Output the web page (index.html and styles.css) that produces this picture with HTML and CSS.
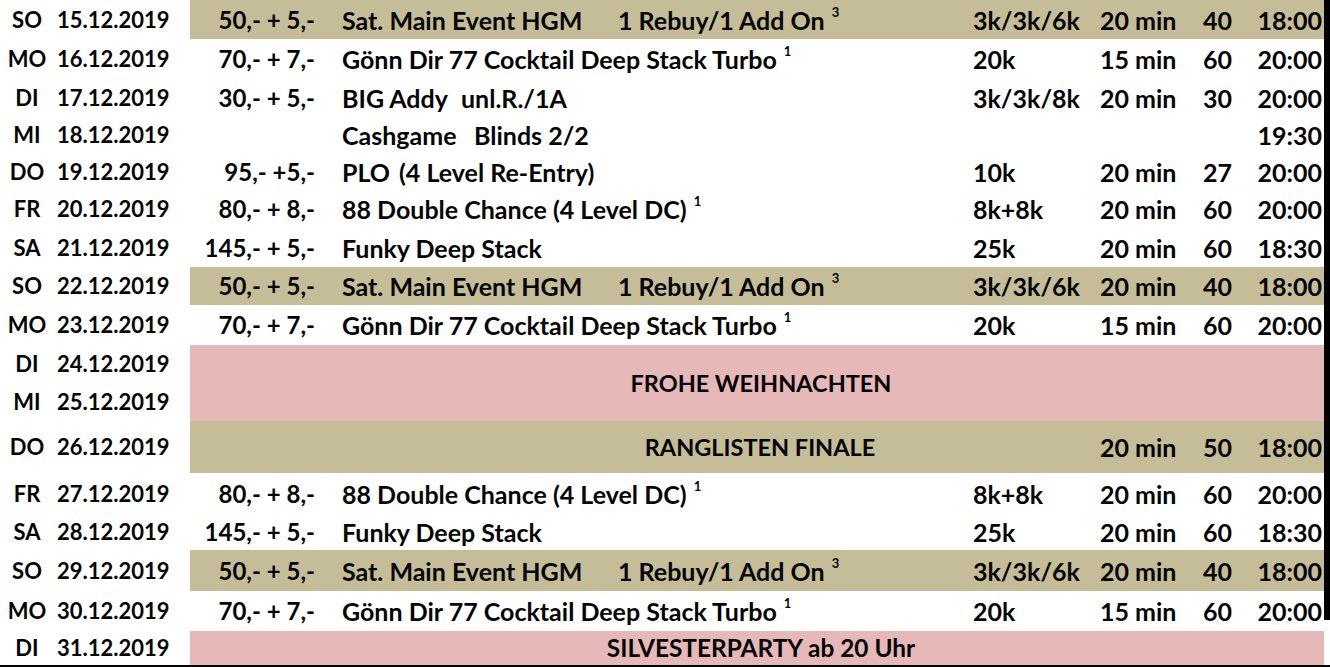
FILE: index.html
```html
<!DOCTYPE html>
<html lang="de">
<head>
<meta charset="utf-8">
<title>Turnierplan Dezember 2019</title>
<link rel="stylesheet" href="styles.css">
</head>
<body>
<div class="sheet">
  <div class="main">
    <table class="plan">
      <colgroup>
        <col class="c-day"><col class="c-date"><col class="c-price"><col class="c-name"><col class="c-chips"><col class="c-lvl"><col class="c-pl"><col class="c-time">
      </colgroup>
      <tbody>
        <tr class="r39 tan">
          <td class="day">SO</td><td class="date">15.12.2019</td>
          <td class="price">50,- + 5,-</td>
          <td class="name"><span class="w-sat">Sat. Main Event HGM</span>1 Rebuy/1 Add On <sup>3</sup></td>
          <td class="chips">3k/3k/6k</td><td class="lvl">20 min</td><td class="pl">40</td><td class="time">18:00</td>
        </tr>
        <tr class="r40">
          <td class="day">MO</td><td class="date">16.12.2019</td>
          <td class="price">70,- + 7,-</td>
          <td class="name">Gönn Dir 77 Cocktail Deep Stack Turbo <sup>1</sup></td>
          <td class="chips">20k</td><td class="lvl">15 min</td><td class="pl">60</td><td class="time">20:00</td>
        </tr>
        <tr class="r38">
          <td class="day">DI</td><td class="date">17.12.2019</td>
          <td class="price">30,- + 5,-</td>
          <td class="name"><span class="w-big">BIG Addy</span>unl.R./1A</td>
          <td class="chips">3k/3k/8k</td><td class="lvl">20 min</td><td class="pl">30</td><td class="time">20:00</td>
        </tr>
        <tr class="r36">
          <td class="day">MI</td><td class="date">18.12.2019</td>
          <td class="price"></td>
          <td class="name"><span class="w-cash">Cashgame</span>Blinds 2/2</td>
          <td class="chips"></td><td class="lvl"></td><td class="pl"></td><td class="time">19:30</td>
        </tr>
        <tr class="r37">
          <td class="day">DO</td><td class="date">19.12.2019</td>
          <td class="price">95,- +5,-</td>
          <td class="name"><span class="w-plo">PLO</span>(4 Level Re-Entry)</td>
          <td class="chips">10k</td><td class="lvl">20 min</td><td class="pl">27</td><td class="time">20:00</td>
        </tr>
        <tr class="r38">
          <td class="day">FR</td><td class="date">20.12.2019</td>
          <td class="price">80,- + 8,-</td>
          <td class="name">88 Double Chance (4 Level DC) <sup>1</sup></td>
          <td class="chips">8k+8k</td><td class="lvl">20 min</td><td class="pl">60</td><td class="time">20:00</td>
        </tr>
        <tr class="r39">
          <td class="day">SA</td><td class="date">21.12.2019</td>
          <td class="price">145,- + 5,-</td>
          <td class="name">Funky Deep Stack</td>
          <td class="chips">25k</td><td class="lvl">20 min</td><td class="pl">60</td><td class="time">18:30</td>
        </tr>
        <tr class="r38 tan">
          <td class="day">SO</td><td class="date">22.12.2019</td>
          <td class="price">50,- + 5,-</td>
          <td class="name"><span class="w-sat">Sat. Main Event HGM</span>1 Rebuy/1 Add On <sup>3</sup></td>
          <td class="chips">3k/3k/6k</td><td class="lvl">20 min</td><td class="pl">40</td><td class="time">18:00</td>
        </tr>
        <tr class="r40">
          <td class="day">MO</td><td class="date">23.12.2019</td>
          <td class="price">70,- + 7,-</td>
          <td class="name">Gönn Dir 77 Cocktail Deep Stack Turbo <sup>1</sup></td>
          <td class="chips">20k</td><td class="lvl">15 min</td><td class="pl">60</td><td class="time">20:00</td>
        </tr>
        <tr class="r38">
          <td class="day">DI</td><td class="date">24.12.2019</td>
          <td class="banner pink" colspan="6" rowspan="2">FROHE WEIHNACHTEN</td>
        </tr>
        <tr class="r38">
          <td class="day">MI</td><td class="date">25.12.2019</td>
        </tr>
        <tr class="r52 tan">
          <td class="day">DO</td><td class="date">26.12.2019</td>
          <td class="banner finale" colspan="3">RANGLISTEN FINALE</td>
          <td class="lvl">20 min</td><td class="pl">50</td><td class="time">18:00</td>
        </tr>
        <tr class="r41">
          <td class="day">FR</td><td class="date">27.12.2019</td>
          <td class="price">80,- + 8,-</td>
          <td class="name">88 Double Chance (4 Level DC) <sup>1</sup></td>
          <td class="chips">8k+8k</td><td class="lvl">20 min</td><td class="pl">60</td><td class="time">20:00</td>
        </tr>
        <tr class="r36">
          <td class="day">SA</td><td class="date">28.12.2019</td>
          <td class="price">145,- + 5,-</td>
          <td class="name">Funky Deep Stack</td>
          <td class="chips">25k</td><td class="lvl">20 min</td><td class="pl">60</td><td class="time">18:30</td>
        </tr>
        <tr class="r41 tan">
          <td class="day">SO</td><td class="date">29.12.2019</td>
          <td class="price">50,- + 5,-</td>
          <td class="name"><span class="w-sat">Sat. Main Event HGM</span>1 Rebuy/1 Add On <sup>3</sup></td>
          <td class="chips">3k/3k/6k</td><td class="lvl">20 min</td><td class="pl">40</td><td class="time">18:00</td>
        </tr>
        <tr class="r40">
          <td class="day">MO</td><td class="date">30.12.2019</td>
          <td class="price">70,- + 7,-</td>
          <td class="name">Gönn Dir 77 Cocktail Deep Stack Turbo <sup>1</sup></td>
          <td class="chips">20k</td><td class="lvl">15 min</td><td class="pl">60</td><td class="time">20:00</td>
        </tr>
        <tr class="r34">
          <td class="day">DI</td><td class="date">31.12.2019</td>
          <td class="banner party pink" colspan="6">SILVESTERPARTY ab 20 Uhr</td>
        </tr>
      </tbody>
    </table>
    <div class="edge"></div>
  </div>
</div>
</body>
</html>
```

FILE: styles.css
```css
html, body {
  margin: 0;
  padding: 0;
  background: #ffffff;
}

.sheet {
  width: 1330px;
  height: 667px;
  overflow: hidden;
  border-bottom: 2px solid #000;
  box-sizing: border-box;
}

.main {
  display: flex;
  align-items: flex-start;
}

.edge {
  width: 6px;
  height: 620px;
  background: #000;
  flex: none;
}

.plan {
  width: 1324px;
  table-layout: fixed;
  border-collapse: collapse;
  border-spacing: 0;
  font-family: Lato, "Open Sans", sans-serif;
  font-weight: 700;
  font-size: 25px;
  color: #050505;
  flex: none;
}

.c-day { width: 54px; }
.c-date { width: 136px; }
.c-price { width: 140px; }
.c-name { width: 633px; }
.c-chips { width: 127px; }
.c-lvl { width: 100px; }
.c-pl { width: 55px; }
.c-time { width: 79px; }

.plan td {
  padding: 0;
  white-space: nowrap;
  vertical-align: middle;
  line-height: 26px;
}

.r34 { height: 34px; }
.r36 { height: 36px; }
.r37 { height: 37px; }
.r38 { height: 38px; }
.r39 { height: 39px; }
.r40 { height: 40px; }
.r41 { height: 41px; }
.r52 { height: 52px; }

.tan td:nth-child(n+3) { background: #c4bd97; }
.plan td.pink { background: #e6b8b7; }

.day {
  text-align: center;
  font-size: 22px;
}
.date {
  font-size: 22px;
  padding-left: 3px !important;
}
.price {
  text-align: right;
  font-size: 24px;
  padding-right: 15px !important;
}
.name { padding-left: 12px !important; }
.chips { padding-left: 10px !important; }
.lvl { padding-left: 10px !important; }
.pl { text-align: center; }
.time { text-align: right; padding-right: 2px !important; }

.banner {
  text-align: center;
  font-size: 23.5px;
  padding-left: 8px !important;
}
.banner.finale {
  padding-left: 240px !important;
}
.banner.party {
  font-size: 24.4px;
}

.w-sat { display: inline-block; width: 276px; }
.w-big { display: inline-block; width: 119px; }
.w-cash { display: inline-block; width: 132px; }
.w-plo { display: inline-block; width: 57px; }

sup {
  font-size: 13px;
  line-height: 0;
  vertical-align: 13px;
  margin-left: 1px;
}
```
